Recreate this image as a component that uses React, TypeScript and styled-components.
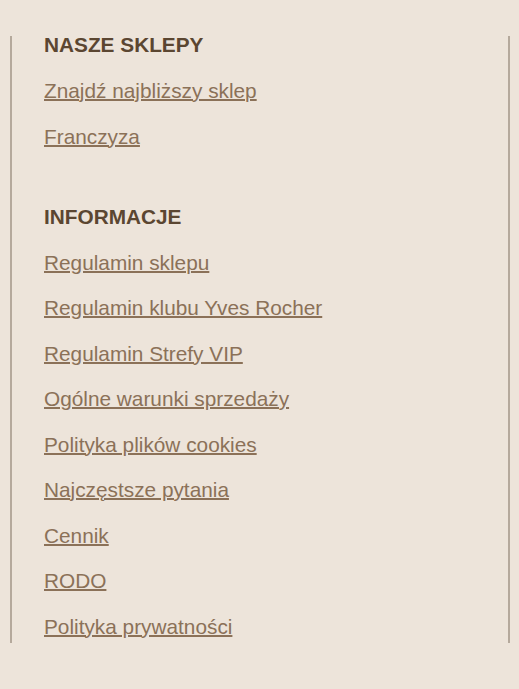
import React from "react";
import styled, { createGlobalStyle } from "styled-components";

const GlobalStyle = createGlobalStyle`
  html, body {
    margin: 0;
    padding: 0;
    background: #ede4da;
  }
  body {
    font-family: "Liberation Sans", Arial, sans-serif;
  }
`;

const Page = styled.div`
  padding: 36px 9px 46px 10px;
`;

const Panel = styled.nav`
  border-left: 2px solid #b5a99c;
  border-right: 2px solid #b5a99c;
  padding: 0 0 5px 32px;
`;

const Section = styled.section`
  & + & {
    margin-top: 60px;
  }
`;

const Heading = styled.h3`
  margin: 0;
  font-size: 20.8px;
  line-height: 18px;
  font-weight: bold;
  color: #5b4631;
  text-transform: uppercase;
`;

const List = styled.ul`
  list-style: none;
  margin: 0;
  padding: 0;
`;

const Item = styled.li`
  margin-top: 23.5px;
  font-size: 20.8px;
  line-height: 22px;
  height: 22px;

  &:first-child {
    margin-top: 26px;
  }
`;

const Link = styled.a`
  color: #8b7158;
  text-decoration: underline;
  text-decoration-thickness: 2px;
  text-underline-offset: 1px;
`;

const sections = [
  {
    title: "Nasze sklepy",
    links: ["Znajdź najbliższy sklep", "Franczyza"],
  },
  {
    title: "Informacje",
    links: [
      "Regulamin sklepu",
      "Regulamin klubu Yves Rocher",
      "Regulamin Strefy VIP",
      "Ogólne warunki sprzedaży",
      "Polityka plików cookies",
      "Najczęstsze pytania",
      "Cennik",
      "RODO",
      "Polityka prywatności",
    ],
  },
];

const App: React.FC = () => {
  return (
    <>
      <GlobalStyle />
      <Page>
        <Panel>
          {sections.map((section) => (
            <Section key={section.title}>
              <Heading>{section.title}</Heading>
              <List>
                {section.links.map((label) => (
                  <Item key={label}>
                    <Link href="#">{label}</Link>
                  </Item>
                ))}
              </List>
            </Section>
          ))}
        </Panel>
      </Page>
    </>
  );
};

export default App;
